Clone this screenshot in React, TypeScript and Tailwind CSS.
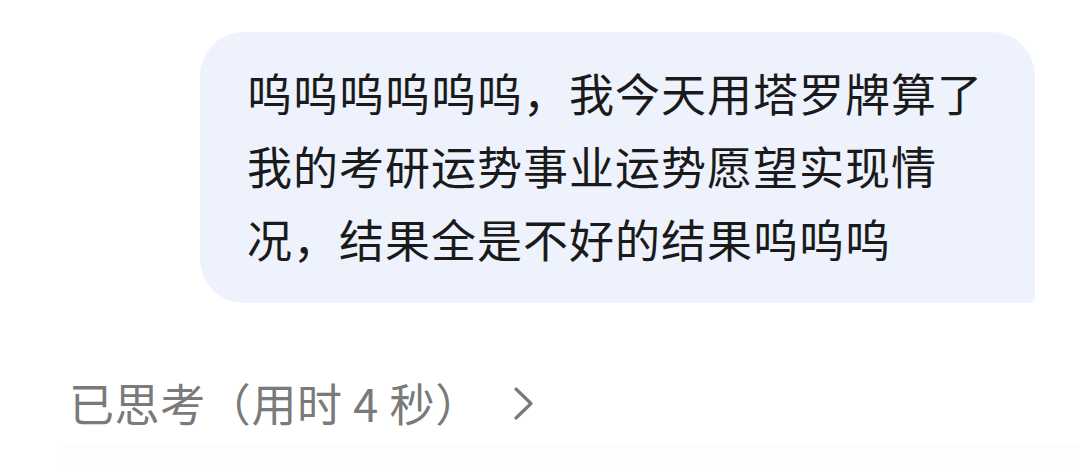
const lines = [
  '呜呜呜呜呜呜，我今天用塔罗牌算了',
  '我的考研运势事业运势愿望实现情',
  '况，结果全是不好的结果呜呜呜',
];

export default function App() {
  return (
    <div
      className="w-[1080px] h-[471px] bg-white overflow-hidden flex flex-col"
      style={{ fontFamily: '"Noto Sans CJK SC", "Noto Sans", sans-serif' }}
    >
      {/* user message */}
      <div className="flex justify-end pt-[32px] pr-[45px]">
        <div className="w-[835px] bg-[#edf2fc] rounded-[44px] rounded-br-[6px] pl-[47px] pr-[30px] pt-[24px] pb-[28px]">
          {lines.map((line) => (
            <p key={line} className="text-[45px] leading-[73px] tracking-[1px] text-[#1a1a1a] whitespace-nowrap">
              {line}
            </p>
          ))}
        </div>
      </div>

      {/* thinking summary */}
      <div className="flex items-center mt-[63px] pl-[69px] text-[#7a7a7a]">
        <span className="text-[45px] leading-[73px] tracking-[0.6px]">已思考（用时 4 秒）</span>
        <svg className="ml-[32px] mt-[1px]" width="21" height="35" viewBox="0 0 21 35" fill="none">
          <polyline
            points="3,3 18,17.5 3,32"
            stroke="currentColor"
            strokeWidth="3.2"
            strokeLinecap="round"
            strokeLinejoin="round"
          />
        </svg>
      </div>

      <div className="flex-1 ml-[63px] mt-[4px] bg-[#fdfdfd]" />
    </div>
  );
}
